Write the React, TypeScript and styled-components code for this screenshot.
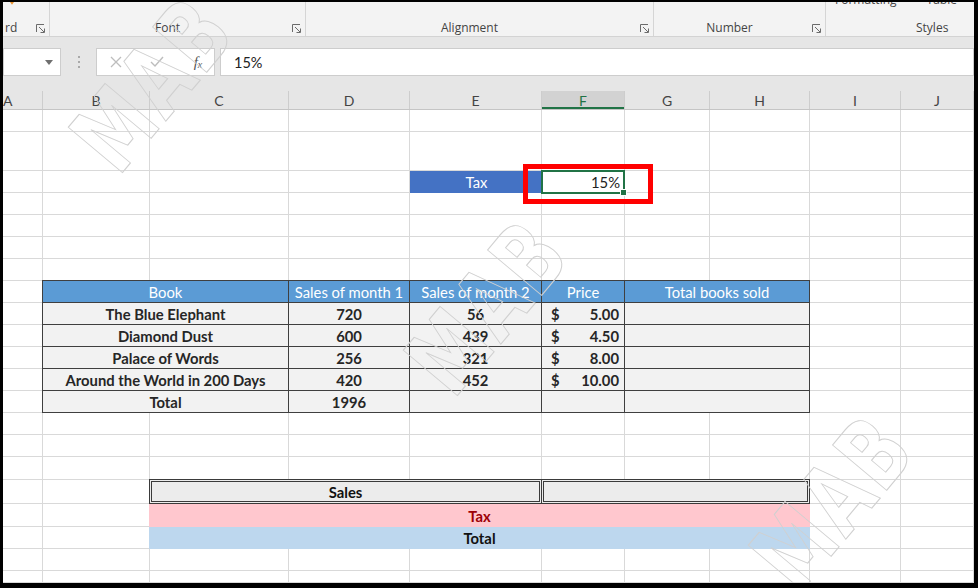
import React from "react";
import styled, { createGlobalStyle, css } from "styled-components";

const COLS = [40, 107, 139, 121, 132, 83, 85, 100, 91];
const ROWS = [22, 39, 22, 22, 22, 22, 22, 22, 22, 22, 22, 22, 22, 22, 22, 23, 24, 23, 22, 22];
const LETTERS = "ABCDEFGHIJ".split("");
const GRID_LINE = "#d9d9d9";
const DARK = "#3f3f3f";

const books = [
  { title: "The Blue Elephant", m1: "720", m2: "56", price: "5.00" },
  { title: "Diamond Dust", m1: "600", m2: "439", price: "4.50" },
  { title: "Palace of Words", m1: "256", m2: "321", price: "8.00" },
  { title: "Around the World in 200 Days", m1: "420", m2: "452", price: "10.00" },
];

const GlobalStyle = createGlobalStyle`
  html, body { margin: 0; padding: 0; background: #fff; }
  body { font-family: Lato, "Liberation Sans", sans-serif; }
`;

const Frame = styled.div`
  position: relative;
  width: 978px;
  height: 588px;
  box-sizing: border-box;
  border-style: solid;
  border-color: #000;
  border-width: 2px 4px 5px 3px;
  overflow: hidden;
  background: #fff;
  display: flex;
  flex-direction: column;
`;

/* ---------- ribbon ---------- */

const Ribbon = styled.div`
  flex: 0 0 auto;
  height: 34px;
  display: flex;
  background: #f3f3f3;
  overflow: hidden;
  font-family: "Open Sans", "Noto Sans", sans-serif;
  font-size: 12px;
  color: #444;
`;

const Group = styled.div<{ $w?: number; $last?: boolean }>`
  flex: ${({ $w }) => ($w ? `0 0 ${$w}px` : "1 1 auto")};
  box-sizing: border-box;
  display: flex;
  flex-direction: column;
  justify-content: space-between;
  border-right: ${({ $last }) => ($last ? "none" : "1px solid #d5d5d5")};
`;

const CutRow = styled.div<{ $pad: number }>`
  display: flex;
  gap: 30px;
  margin-top: -10px;
  padding-left: ${({ $pad }) => $pad}px;
  height: 16px;
  line-height: 16px;
  white-space: nowrap;
`;

const LabelRow = styled.div`
  display: flex;
  align-items: center;
  height: 16px;
  line-height: 16px;
`;

const Label = styled.span<{ $align?: string; $pad?: number }>`
  flex: 1;
  text-align: ${({ $align }) => $align ?? "center"};
  padding-left: ${({ $pad }) => $pad ?? 0}px;
  white-space: nowrap;
`;

const Launcher = styled.span`
  display: flex;
  width: 9px;
  height: 9px;
  margin: 0 4px 0 7px;
`;

const LauncherIcon = () => (
  <svg width="9" height="9" viewBox="0 0 9 9" fill="none" stroke="#6b6b6b" strokeWidth="1">
    <path d="M0.5 8 V0.5 H8" />
    <path d="M3 3 L8 8" />
    <path d="M4.5 8.5 H8.5 V4.5" />
  </svg>
);

const PainterTip = styled.span`
  display: flex;
  margin: -3px 0 0 5px;
  height: 6px;
`;

/* ---------- formula bar ---------- */

const FormulaArea = styled.div`
  flex: 0 0 auto;
  display: flex;
  background: #e6e6e6;
  border-top: 1px solid #d3d3d3;
  padding: 11px 0 12px;
  height: 28px;
`;

const WhiteBox = styled.div`
  box-sizing: border-box;
  background: #fff;
  border: 1px solid #cdcdcd;
  display: flex;
  align-items: center;
`;

const NameBox = styled(WhiteBox)`
  width: 58px;
  justify-content: flex-end;
  padding-right: 7px;
`;

const Dots = styled.div`
  width: 35px;
  display: flex;
  flex-direction: column;
  align-items: center;
  justify-content: center;
  gap: 3px;
  span {
    width: 2px;
    height: 2px;
    background: #a9a9a9;
  }
`;

const FuncBox = styled(WhiteBox)`
  width: 119px;
  padding-left: 9px;
  gap: 21px;
`;

const FuncSlot = styled.span`
  width: 20px;
  display: flex;
  justify-content: center;
  align-items: center;
`;

const Fx = styled.i`
  font-family: "Liberation Serif", serif;
  font-size: 15px;
  color: #555;
  sub {
    font-size: 10px;
    vertical-align: -1px;
  }
`;

const FormulaInput = styled(WhiteBox)`
  flex: 1;
  margin-left: 5px;
  padding-left: 13px;
  font-size: 14.5px;
  color: #222;
`;

/* ---------- column headers ---------- */

const HeaderRow = styled.div`
  flex: 0 0 auto;
  display: grid;
  grid-template-columns: ${COLS.map((w) => `${w}px`).join(" ")} 1fr;
  height: 22px;
  box-sizing: border-box;
  background: #e6e6e6;
  border-bottom: 1px solid #c5c5c5;
`;

const ColHead = styled.div<{ $active?: boolean; $left?: boolean }>`
  display: flex;
  align-items: center;
  justify-content: ${({ $left }) => ($left ? "flex-start" : "center")};
  font-size: 14px;
  color: ${({ $active }) => ($active ? "#217346" : "#444")};
  background: ${({ $active }) => ($active ? "#d2d2d2" : "transparent")};
  border-right: 1px solid #cdcdcd;
  box-shadow: ${({ $active }) => ($active ? "inset 0 -2px 0 #217346" : "none")};
  margin-top: 3px;
`;

/* ---------- sheet grid ---------- */

const Sheet = styled.div`
  flex: 1;
  display: grid;
  grid-template-columns: ${COLS.map((w) => `${w}px`).join(" ")} 1fr;
  grid-template-rows: ${ROWS.map((h) => `${h}px`).join(" ")} 1fr;
  overflow: hidden;
  font-size: 14.8px;
  color: #262626;
`;

type Pos = { $r: number; $c: number; $span?: number };

const place = css<Pos>`
  grid-row: ${({ $r }) => $r};
  grid-column: ${({ $c }) => $c} / span ${({ $span }) => $span ?? 1};
`;

const BaseCell = styled.div<Pos>`
  ${place};
  border-right: 1px solid ${GRID_LINE};
  border-bottom: 1px solid ${GRID_LINE};
`;

const TaxLabel = styled.div<Pos>`
  ${place};
  background: #4472c4;
  color: #fff;
  display: flex;
  align-items: center;
  justify-content: center;
  padding-left: 1px;
`;

const SelectedCell = styled.div<Pos>`
  ${place};
  position: relative;
  z-index: 2;
  margin: -1px 0 -1px -1px;
  border: 2px solid #217346;
  display: flex;
  align-items: center;
  justify-content: flex-end;
  padding-right: 3px;
  color: #222;
`;

const FillHandle = styled.span`
  position: absolute;
  right: -4px;
  bottom: -4px;
  width: 5px;
  height: 5px;
  background: #217346;
  border: 1px solid #fff;
`;

const TableCell = styled.div<Pos & { $head?: boolean; $split?: boolean }>`
  ${place};
  margin: -1px 0 0 -1px;
  border: 1px solid ${DARK};
  background: ${({ $head }) => ($head ? "#5b9bd5" : "#f2f2f2")};
  color: ${({ $head }) => ($head ? "#fff" : "#262626")};
  font-weight: ${({ $head }) => ($head ? 400 : 700)};
  display: flex;
  align-items: center;
  justify-content: ${({ $split }) => ($split ? "space-between" : "center")};
  padding: ${({ $split }) => ($split ? "0 5px 0 9px" : "0")};
  white-space: nowrap;
  overflow: hidden;
`;

const SummaryBox = styled.div<Pos>`
  ${place};
  margin: -1px 0 0 -1px;
  border: 3px double #3a3a3a;
  background: #ececec;
  display: flex;
  align-items: center;
  justify-content: center;
  font-weight: 700;
  color: #111;
`;

const Band = styled.div<Pos & { $tone: "bad" | "accent" }>`
  ${place};
  margin-left: -1px;
  background: ${({ $tone }) => ($tone === "bad" ? "#ffc7ce" : "#bdd7ee")};
  color: ${({ $tone }) => ($tone === "bad" ? "#9c0006" : "#111")};
  font-weight: 700;
  display: flex;
  align-items: center;
  justify-content: center;
`;

/* ---------- overlays ---------- */

const Callout = styled.div`
  position: absolute;
  left: 520px;
  top: 162px;
  width: 130px;
  height: 40px;
  box-sizing: border-box;
  border: 5px solid #ff0000;
  z-index: 5;
`;

const Watermark = styled.span<{ $x: number; $y: number }>`
  position: absolute;
  left: ${({ $x }) => $x}px;
  top: ${({ $y }) => $y}px;
  transform: translate(-50%, -50%) rotate(-50deg) scaleX(0.8) scaleY(1.1);
  font-family: "DejaVu Sans", sans-serif;
  font-weight: 700;
  font-size: 88px;
  letter-spacing: 4px;
  color: transparent;
  -webkit-text-stroke: 1px #d0d0d0;
  pointer-events: none;
  z-index: 4;
  white-space: nowrap;
`;

export default function App() {
  const base: React.ReactNode[] = [];
  for (let r = 1; r <= ROWS.length + 1; r++) {
    for (let c = 1; c <= 10; c++) {
      base.push(<BaseCell key={`${r}-${c}`} $r={r} $c={c} />);
    }
  }

  return (
    <>
      <GlobalStyle />
      <Frame>
        <Ribbon>
          <Group $w={47}>
            <PainterTip>
              <svg width="8" height="6" viewBox="0 0 8 6">
                <path d="M1 0 L4 4 L7 0" fill="none" stroke="#e8912d" strokeWidth="2" />
              </svg>
            </PainterTip>
            <LabelRow>
              <Label $align="left" $pad={2}>rd</Label>
              <Launcher><LauncherIcon /></Launcher>
            </LabelRow>
          </Group>
          <Group $w={256}>
            <span />
            <LabelRow>
              <Label>Font</Label>
              <Launcher><LauncherIcon /></Launcher>
            </LabelRow>
          </Group>
          <Group $w={348}>
            <span />
            <LabelRow>
              <Label>Alignment</Label>
              <Launcher><LauncherIcon /></Launcher>
            </LabelRow>
          </Group>
          <Group $w={172}>
            <span />
            <LabelRow>
              <Label>Number</Label>
              <Launcher><LauncherIcon /></Launcher>
            </LabelRow>
          </Group>
          <Group $last>
            <CutRow $pad={9}>
              <span>Formatting</span>
              <span>Table</span>
            </CutRow>
            <LabelRow>
              <Label $align="left" $pad={90}>Styles</Label>
            </LabelRow>
          </Group>
        </Ribbon>

        <FormulaArea>
          <NameBox>
            <svg width="8" height="5" viewBox="0 0 8 5">
              <path d="M0 0 H8 L4 5 Z" fill="#6f6f6f" />
            </svg>
          </NameBox>
          <Dots>
            <span />
            <span />
            <span />
          </Dots>
          <FuncBox>
            <FuncSlot>
              <svg width="12" height="12" viewBox="0 0 12 12" stroke="#bdbdbd" strokeWidth="1.3">
                <path d="M1 1 L11 11 M11 1 L1 11" />
              </svg>
            </FuncSlot>
            <FuncSlot>
              <svg width="14" height="12" viewBox="0 0 14 12" fill="none" stroke="#bdbdbd" strokeWidth="1.4">
                <path d="M1 6 L5 10 L13 1" />
              </svg>
            </FuncSlot>
            <FuncSlot>
              <Fx>
                f<sub>x</sub>
              </Fx>
            </FuncSlot>
          </FuncBox>
          <FormulaInput>15%</FormulaInput>
        </FormulaArea>

        <HeaderRow>
          {LETTERS.map((l) => (
            <ColHead key={l} $active={l === "F"} $left={l === "A"}>
              {l}
            </ColHead>
          ))}
        </HeaderRow>

        <Sheet>
          {base}

          <TaxLabel $r={3} $c={5}>Tax</TaxLabel>
          <SelectedCell $r={3} $c={6}>
            15%
            <FillHandle />
          </SelectedCell>

          <TableCell $r={8} $c={2} $span={2} $head>Book</TableCell>
          <TableCell $r={8} $c={4} $head>Sales of month 1</TableCell>
          <TableCell $r={8} $c={5} $head>Sales of month 2</TableCell>
          <TableCell $r={8} $c={6} $head>Price</TableCell>
          <TableCell $r={8} $c={7} $span={2} $head>Total books sold</TableCell>

          {books.map((b, i) => (
            <React.Fragment key={b.title}>
              <TableCell $r={9 + i} $c={2} $span={2}>{b.title}</TableCell>
              <TableCell $r={9 + i} $c={4}>{b.m1}</TableCell>
              <TableCell $r={9 + i} $c={5}>{b.m2}</TableCell>
              <TableCell $r={9 + i} $c={6} $split>
                <span>$</span>
                <span>{b.price}</span>
              </TableCell>
              <TableCell $r={9 + i} $c={7} $span={2} />
            </React.Fragment>
          ))}

          <TableCell $r={13} $c={2} $span={2}>Total</TableCell>
          <TableCell $r={13} $c={4}>1996</TableCell>
          <TableCell $r={13} $c={5} />
          <TableCell $r={13} $c={6} />
          <TableCell $r={13} $c={7} $span={2} />

          <SummaryBox $r={17} $c={3} $span={3}>Sales</SummaryBox>
          <SummaryBox $r={17} $c={6} $span={3} />
          <Band $r={18} $c={3} $span={6} $tone="bad">Tax</Band>
          <Band $r={19} $c={3} $span={6} $tone="accent">Total</Band>
        </Sheet>

        <Callout />
        <Watermark $x={150} $y={82}>MAB</Watermark>
        <Watermark $x={485} $y={305}>MAB</Watermark>
        <Watermark $x={830} $y={500}>MAB</Watermark>
      </Frame>
    </>
  );
}
